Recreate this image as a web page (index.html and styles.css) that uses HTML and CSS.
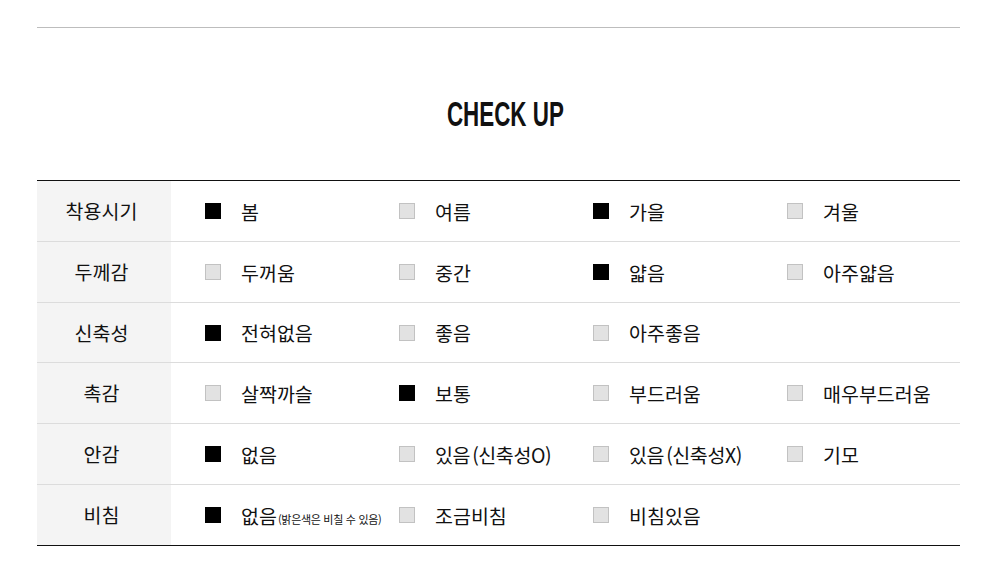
FILE: index.html
```html
<!DOCTYPE html>
<html lang="ko">
<head>
<meta charset="utf-8">
<link rel="stylesheet" href="styles.css">
</head>
<body>
<div class="wrap">
  <div class="topline"></div>
  <h2 class="title"><span>CHECK UP</span></h2>
  <div class="table">
    <div class="row">
      <div class="label">착용시기</div>
      <div class="opts">
        <div class="opt"><i class="box on"></i><span>봄</span></div>
        <div class="opt"><i class="box"></i><span>여름</span></div>
        <div class="opt"><i class="box on"></i><span>가을</span></div>
        <div class="opt"><i class="box"></i><span>겨울</span></div>
      </div>
    </div>
    <div class="row">
      <div class="label">두께감</div>
      <div class="opts">
        <div class="opt"><i class="box"></i><span>두꺼움</span></div>
        <div class="opt"><i class="box"></i><span>중간</span></div>
        <div class="opt"><i class="box on"></i><span>얇음</span></div>
        <div class="opt"><i class="box"></i><span>아주얇음</span></div>
      </div>
    </div>
    <div class="row short">
      <div class="label">신축성</div>
      <div class="opts">
        <div class="opt"><i class="box on"></i><span>전혀없음</span></div>
        <div class="opt"><i class="box"></i><span>좋음</span></div>
        <div class="opt"><i class="box"></i><span>아주좋음</span></div>
      </div>
    </div>
    <div class="row">
      <div class="label">촉감</div>
      <div class="opts">
        <div class="opt"><i class="box"></i><span>살짝까슬</span></div>
        <div class="opt"><i class="box on"></i><span>보통</span></div>
        <div class="opt"><i class="box"></i><span>부드러움</span></div>
        <div class="opt"><i class="box"></i><span>매우부드러움</span></div>
      </div>
    </div>
    <div class="row">
      <div class="label">안감</div>
      <div class="opts">
        <div class="opt"><i class="box on"></i><span>없음</span></div>
        <div class="opt"><i class="box"></i><span class="tight">있음 (신축성O)</span></div>
        <div class="opt"><i class="box"></i><span class="tight">있음 (신축성X)</span></div>
        <div class="opt"><i class="box"></i><span>기모</span></div>
      </div>
    </div>
    <div class="row last">
      <div class="label">비침</div>
      <div class="opts">
        <div class="opt"><i class="box on"></i><span>없음<small>(밝은색은 비칠 수 있음)</small></span></div>
        <div class="opt"><i class="box"></i><span>조금비침</span></div>
        <div class="opt"><i class="box"></i><span>비침있음</span></div>
      </div>
    </div>
  </div>
</div>
</body>
</html>
```
FILE: styles.css
```css
html, body {
  margin: 0;
  padding: 0;
  background: #fff;
}
body {
  font-family: "Noto Sans CJK KR", "Noto Sans", sans-serif;
  color: #111;
}
.wrap {
  width: 923px;
  margin-left: 37px;
  padding-top: 27px;
}
.topline {
  height: 1px;
  background: #bdbdbd;
}
.title {
  margin: 0;
  height: 152px;
  display: flex;
  align-items: center;
  justify-content: center;
  padding-left: 14px;
  padding-top: 18px;
  box-sizing: border-box;
  font-family: "Liberation Sans Narrow", "Liberation Sans", sans-serif;
  font-weight: 700;
  font-size: 35px;
  line-height: 1;
  color: #111;
}
.title span {
  display: inline-block;
  transform: scaleX(0.64);
}
.table {
  border-top: 1px solid #111;
  border-bottom: 1px solid #111;
}
.row {
  display: grid;
  grid-template-columns: 134px 1fr;
  height: 61px;
  border-bottom: 1px solid #dcdcdc;
  box-sizing: border-box;
}
.row.short {
  height: 60px;
}
.row.last {
  border-bottom: none;
  height: 60px;
}
.label {
  background: #f4f4f4;
  display: flex;
  align-items: center;
  justify-content: center;
  padding-right: 5px;
  padding-bottom: 1px;
  font-size: 19.5px;
  color: #111;
}
.opts {
  display: grid;
  grid-template-columns: repeat(4, 194px);
  padding-left: 34px;
  align-items: center;
}
.opt {
  display: flex;
  align-items: center;
  font-size: 19.5px;
  white-space: nowrap;
}
.tight {
  word-spacing: -3px;
  letter-spacing: -0.4px;
}
.box {
  width: 16px;
  height: 16px;
  box-sizing: border-box;
  background: #e2e2e2;
  border: 1px solid #c2c2c2;
  margin-right: 20px;
  flex: none;
}
.box.on {
  background: #000;
  border-color: #000;
}
.opt small {
  font-size: 11px;
  margin-left: 1px;
  letter-spacing: -0.3px;
  word-spacing: 0;
}
```
